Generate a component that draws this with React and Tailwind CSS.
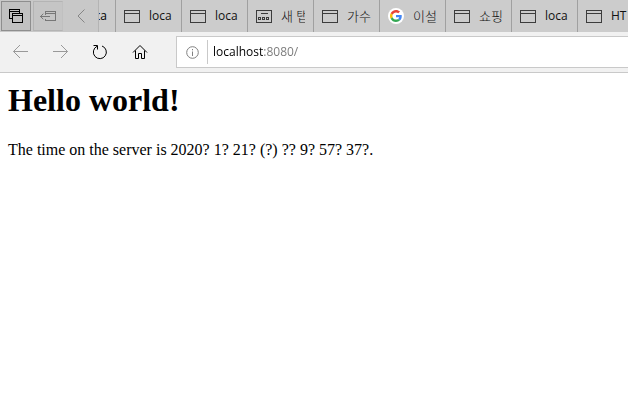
import React from "react";

function WindowIcon() {
  return (
    <svg width="16" height="13" viewBox="0 0 16 13" fill="none" stroke="#3c3c3c" shapeRendering="crispEdges" className="shrink-0">
      <rect x="0.5" y="0.5" width="15" height="12" />
      <path d="M0 3.5H16" />
    </svg>
  );
}

function NewTabIcon() {
  return (
    <svg width="16" height="13" viewBox="0 0 16 13" fill="none" stroke="#3c3c3c" shapeRendering="crispEdges" className="shrink-0">
      <rect x="0.5" y="0.5" width="15" height="12" />
      <path d="M5 3.5H12M2.5 7.5h2v2h-2zM6.5 7.5h2v2h-2zM10.5 7.5h2v2h-2z" />
    </svg>
  );
}

function GoogleIcon() {
  return (
    <svg width="16" height="16" viewBox="0 0 16 16" className="shrink-0">
      <circle cx="8" cy="8" r="8" fill="#fff" />
      <g transform="translate(2 2) scale(0.25)">
        <path fill="#EA4335" d="M24 9.5c3.54 0 6.71 1.22 9.21 3.6l6.85-6.85C35.9 2.38 30.47 0 24 0 14.62 0 6.51 5.38 2.56 13.22l7.98 6.19C12.43 13.72 17.74 9.5 24 9.5z" />
        <path fill="#4285F4" d="M46.98 24.55c0-1.57-.15-3.09-.38-4.55H24v9.02h12.94c-.58 2.96-2.26 5.48-4.78 7.18l7.73 6c4.51-4.18 7.09-10.36 7.09-17.65z" />
        <path fill="#FBBC05" d="M10.53 28.59c-.48-1.45-.76-2.99-.76-4.59s.27-3.14.76-4.59l-7.98-6.19C.92 16.46 0 20.12 0 24c0 3.88.92 7.54 2.56 10.78l7.97-6.19z" />
        <path fill="#34A853" d="M24 48c6.48 0 11.93-2.13 15.89-5.81l-7.73-6c-2.15 1.45-4.92 2.3-8.16 2.3-6.26 0-11.57-4.22-13.47-9.91l-7.98 6.19C6.51 42.62 14.62 48 24 48z" />
      </g>
    </svg>
  );
}

const latin = "text-xs";
const korean = "text-[13px] font-light";

const tabs = [
  { title: "loca", Icon: WindowIcon, font: latin },
  { title: "loca", Icon: WindowIcon, font: latin },
  { title: "새 탭", Icon: NewTabIcon, font: korean },
  { title: "가수", Icon: WindowIcon, font: korean },
  { title: "이설", Icon: GoogleIcon, font: korean },
  { title: "쇼핑", Icon: WindowIcon, font: korean },
  { title: "loca", Icon: WindowIcon, font: latin },
  { title: "HT", Icon: WindowIcon, font: latin },
];

function TabBar() {
  return (
    <header className="flex h-8 overflow-hidden bg-[#cccccc]">
      <div className="flex shrink-0 items-center bg-[#c8c8c8]">
        <button aria-label="Tabs you've set aside" className="ml-px flex h-[30px] w-[30px] items-center justify-center border border-[#8e8e8e] bg-[#c1c1c1]">
          <svg width="14" height="14" viewBox="0 0 14 14" fill="none" stroke="#000" shapeRendering="crispEdges">
            <path d="M3 9.5H0.5V0.5H10.5V4M0 2.5H11" />
            <rect x="3.5" y="4.5" width="10" height="9" />
            <path d="M3 6.5H14" />
          </svg>
        </button>
        <button aria-label="Set these tabs aside" className="ml-0.5 flex h-[30px] w-[30px] items-center justify-center border border-[#b4b4b4] border-r-[#c0c0c0] bg-[#c5c5c5]">
          <svg width="16" height="10" viewBox="0 0 16 10" fill="none" stroke="#777">
            <path d="M5.5 3.5V0.5H15.5V9.5H5.5V7.5M5 2.5H16" shapeRendering="crispEdges" />
            <path d="M0 5.5H10" shapeRendering="crispEdges" />
            <path d="M3.3 2.7L0.6 5.5L3.3 8.3" />
          </svg>
        </button>
        <button aria-label="Scroll tabs left" className="flex h-8 w-9 items-center justify-center border-r border-[#b4b4b4] bg-[#c8c8c8]">
          <svg width="8" height="14" viewBox="0 0 8 14" fill="none" stroke="#858585">
            <path d="M7.5 0.5L1 7L7.5 13.5" />
          </svg>
        </button>
      </div>
      <nav aria-label="Tabs" className="flex min-w-0 flex-1 overflow-hidden">
        <button className="flex w-[17px] shrink-0 items-center justify-end overflow-hidden border-r border-[#a0a0a0] pr-2 text-xs">
          ca
        </button>
        {tabs.map(({ title, Icon, font }, index) => (
          <button key={index} className="flex w-[66px] shrink-0 items-center border-r border-[#a0a0a0] pr-2 pl-2">
            <span className="flex w-4 shrink-0 justify-center">
              <Icon />
            </span>
            <span className={`ml-[9px] w-6 overflow-hidden text-left leading-5 whitespace-nowrap text-[#111] ${font}`}>{title}</span>
          </button>
        ))}
      </nav>
    </header>
  );
}

function Toolbar() {
  return (
    <div className="flex h-[41px] items-center border-b border-[#c9c9c9] bg-[#f1f1f1]">
      <div className="flex shrink-0">
        <button aria-label="Back" className="flex w-10 justify-center">
          <svg width="16" height="14" viewBox="0 0 16 14" fill="none" stroke="#999">
            <path d="M16 7.5H1.5M8 1L1.5 7.5L8 14" />
          </svg>
        </button>
        <button aria-label="Forward" className="flex w-10 justify-center">
          <svg width="16" height="14" viewBox="0 0 16 14" fill="none" stroke="#999">
            <path d="M1 7.5H15.5M9 1L15.5 7.5L9 14" />
          </svg>
        </button>
        <button aria-label="Refresh" className="flex w-10 justify-center">
          <svg width="16" height="16" viewBox="0 0 16 16" fill="none" stroke="#000">
            <path d="M10 2A6.5 6.5 0 1 1 5 2.3M1.5 1.5H5.5V5.5" />
          </svg>
        </button>
        <button aria-label="Home" className="flex w-10 justify-center">
          <svg width="16" height="16" viewBox="0 0 16 16" fill="none" stroke="#000">
            <path d="M1 8.5L8 1.5L15 8.5M3.5 6.5V14.5H6.5V9.5H9.5V14.5H12.5V6.5" />
          </svg>
        </button>
      </div>
      <div className="ml-4 flex h-8 min-w-0 flex-1 items-center border border-r-0 border-[#c9c9c9] bg-white">
        <button aria-label="Site information" className="flex w-[30px] shrink-0 justify-center">
          <svg width="13" height="13" viewBox="0 0 13 13" fill="none" stroke="#808080">
            <circle cx="6.5" cy="6.5" r="5.8" />
            <path d="M6.5 5.5V10M6.5 3V4.3" />
          </svg>
        </button>
        <input
          type="text"
          aria-label="Address"
          defaultValue="localhost:8080/"
          className="h-6 min-w-0 flex-1 border-l border-[#c9c9c9] bg-[linear-gradient(to_right,#000_56px,#777_56px)] bg-clip-text pb-0.5 pl-[5px] text-xs text-transparent caret-black outline-none"
        />
      </div>
    </div>
  );
}

export default function App() {
  return (
    <div className="min-h-screen bg-white font-['Open_Sans','Noto_Sans_CJK_KR',sans-serif] text-black">
      <TabBar />
      <Toolbar />
      <main className="px-2 pt-[9px] font-['Liberation_Serif',serif]">
        <h1 className="text-[32px] leading-9 font-bold">Hello world!</h1>
        <p className="mt-5 text-base">The time on the server is 2020? 1? 21? (?) ?? 9? 57? 37?.</p>
      </main>
    </div>
  );
}
